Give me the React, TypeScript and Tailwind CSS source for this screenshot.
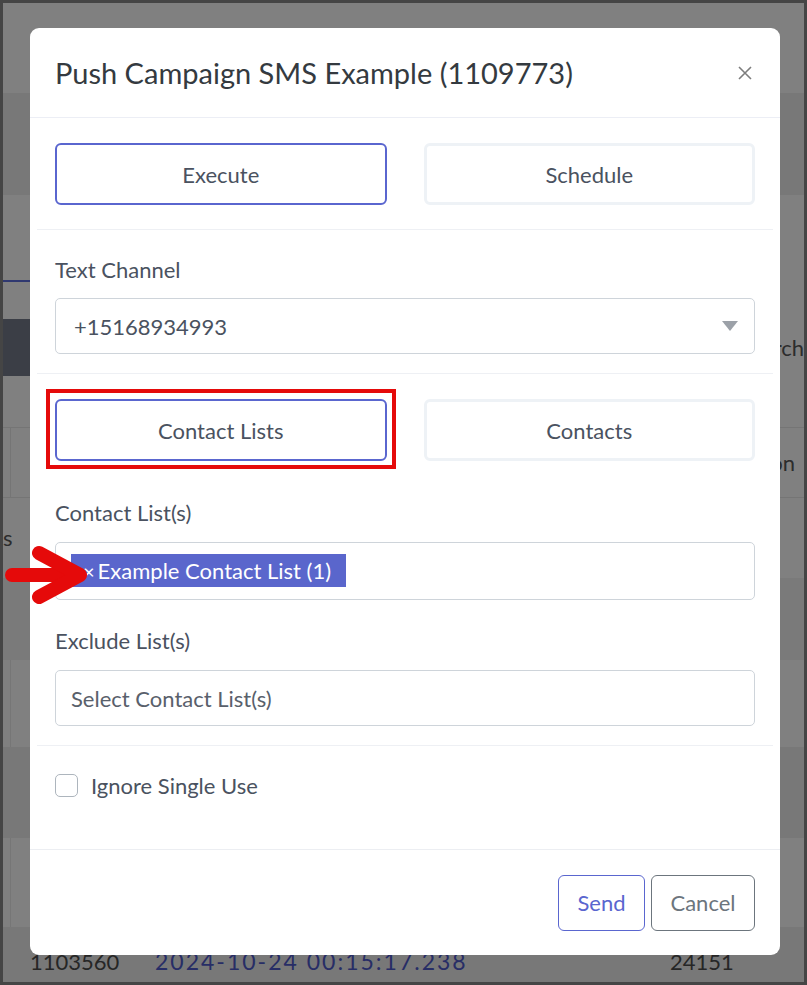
import React from "react";

const ink = "text-[#4a5260]";

function ToggleButton({ label, active }: { label: string; active?: boolean }) {
  return (
    <button
      className={
        "h-[62px] rounded-[6px] bg-white text-[22px] " +
        ink +
        (active ? " border-2 border-[#5a66cf]" : " border-[3px] border-[#eef2f6]")
      }
    >
      {label}
    </button>
  );
}

function Label({ children }: { children: React.ReactNode }) {
  return <div className={"h-[24px] text-[22px] leading-[24px] " + ink}>{children}</div>;
}

export default function App() {
  return (
    <div className="relative h-[985px] w-[807px] overflow-hidden border-[3px] border-[#454545] bg-[#808080] font-['Lato',sans-serif]">
      {/* dimmed page behind the dialog */}
      <div className="flex h-full flex-col">
        <div className="h-[90px] shrink-0 bg-[#808080]" />
        <div className="h-[102px] shrink-0 bg-[#787878]" />
        <div className="flex h-[87px] shrink-0 items-end">
          <div className="h-[2px] w-[200px] bg-[#2f3870]" />
        </div>
        <div className="h-[37px] shrink-0" />
        <div className="flex h-[57px] shrink-0 items-center justify-between">
          <div className="h-full w-[120px] bg-[#3b3e46]" />
          <span className="text-[22px] leading-none text-[#2c2c2c]">rch</span>
        </div>
        <div className="h-[52px] shrink-0 border-b border-[#757575]" />
        <div className="flex h-[70px] shrink-0 items-center justify-between border-b border-[#757575]">
          <div className="h-full w-[8px] border-r border-[#757575]" />
          <span className="pr-[9px] text-[22px] leading-none text-[#2c2c2c]">on</span>
        </div>
        <div className="flex h-[80px] shrink-0 items-center">
          <span className="text-[22px] leading-none text-[#2c2c2c]">s</span>
        </div>
        <div className="h-[82px] shrink-0 bg-[#7a7a7a]" />
        <div className="flex h-[87px] shrink-0 bg-[#808080]">
          <div className="h-full w-[8px] border-r border-[#767676]" />
        </div>
        <div className="h-[91px] shrink-0 bg-[#787878]" />
        <div className="flex h-[89px] shrink-0 bg-[#808080]">
          <div className="h-full w-[8px] border-r border-[#767676]" />
        </div>
        <div className="flex h-[55px] shrink-0 items-end bg-[#787878] pb-[4px] text-[22px] text-[#262626]">
          <span className="ml-[27px] w-[125px]">1103560</span>
          <span className="w-[515px] text-[23px] tracking-[2px] text-[#272d66]">2024-10-24 00:15:17.238</span>
          <span>24151</span>
        </div>
      </div>

      {/* dialog */}
      <div className="absolute left-[27px] top-[25px] flex h-[927px] w-[750px] flex-col rounded-[9px] bg-white">
        <div className="flex h-[90px] shrink-0 items-center justify-between border-b border-[#eceef5] pl-[25px] pr-[28px]">
          <h2 className="text-[29px] text-[#343a40]">Push Campaign SMS Example (1109773)</h2>
          <svg width="14" height="14" viewBox="0 0 14 14">
            <path d="M1 1L13 13M13 1L1 13" stroke="#7d7d7d" strokeWidth="1.6" />
          </svg>
        </div>

        <div className="mx-[7px] border-b border-[#eef0f4] px-[18px] pb-[24px] pt-[25px]">
          <div className="grid grid-cols-2 gap-[37px]">
            <ToggleButton label="Execute" active />
            <ToggleButton label="Schedule" />
          </div>
        </div>

        <div className="mx-[7px] border-b border-[#eef0f4] px-[18px] pb-[19px] pt-[28px]">
          <Label>Text Channel</Label>
          <div className="mt-[16px] flex h-[56px] items-center justify-between rounded-[5px] border border-[#ced4da] pl-[18px] pr-[16px]">
            <span className={"text-[22px] " + ink}>+15168934993</span>
            <svg width="16" height="10" viewBox="0 0 16 10">
              <path d="M0 0h16L8 10z" fill="#9ca1a8" />
            </svg>
          </div>
        </div>

        <div className="mx-[7px] border-b border-[#eef0f4] px-[18px] pb-[19px] pt-[25px]">
          <div className="grid grid-cols-2 gap-[37px]">
            <ToggleButton label="Contact Lists" active />
            <ToggleButton label="Contacts" />
          </div>
          <div className="mt-[40px]">
            <Label>Contact List(s)</Label>
          </div>
          <div className="mt-[17px] flex h-[58px] items-start rounded-[5px] border border-[#ced4da] pl-[15px] pt-[11px]">
            <span className="flex h-[33px] items-center bg-[#5a66cc] pl-[12px] pr-[15px] text-[22px] text-white">
              <span className="mr-[3px] text-[20px]">×</span>Example Contact List (1)
            </span>
          </div>
          <div className="mt-[29px]">
            <Label>Exclude List(s)</Label>
          </div>
          <div className="mt-[17px] flex h-[56px] items-center rounded-[5px] border border-[#ced4da] pl-[15px]">
            <span className="text-[22px] text-[#59606b]">Select Contact List(s)</span>
          </div>
        </div>

        <div className="mx-[7px] flex-1 px-[18px] pt-[23px]">
          <label className="flex items-center gap-[13px]">
            <span className="h-[23px] w-[23px] rounded-[5px] border border-[#adb5bd] bg-white" />
            <span className={"text-[22px] " + ink}>Ignore Single Use</span>
          </label>
        </div>

        <div className="flex h-[106px] shrink-0 items-center justify-end gap-[6px] border-t border-[#eceef2] pr-[25px]">
          <button className="h-[56px] w-[87px] rounded-[6px] border border-[#5a66cf] text-[22px] text-[#5a66cf]">Send</button>
          <button className="h-[56px] w-[104px] rounded-[6px] border border-[#6c757d] text-[22px] text-[#6c757d]">Cancel</button>
        </div>
      </div>

      {/* annotation: red frame + arrow */}
      <div className="absolute left-[43px] top-[386px] h-[80px] w-[350px] border-[4px] border-[#e50a0a]" />
      <svg className="absolute left-0 top-[542px]" width="95" height="60" viewBox="0 0 95 60">
        <g stroke="#e50a0a" strokeWidth="14" strokeLinecap="round" strokeLinejoin="round" fill="none">
          <path d="M9 30H76" />
          <path d="M36 8L77 30L36 52" />
        </g>
      </svg>
    </div>
  );
}
